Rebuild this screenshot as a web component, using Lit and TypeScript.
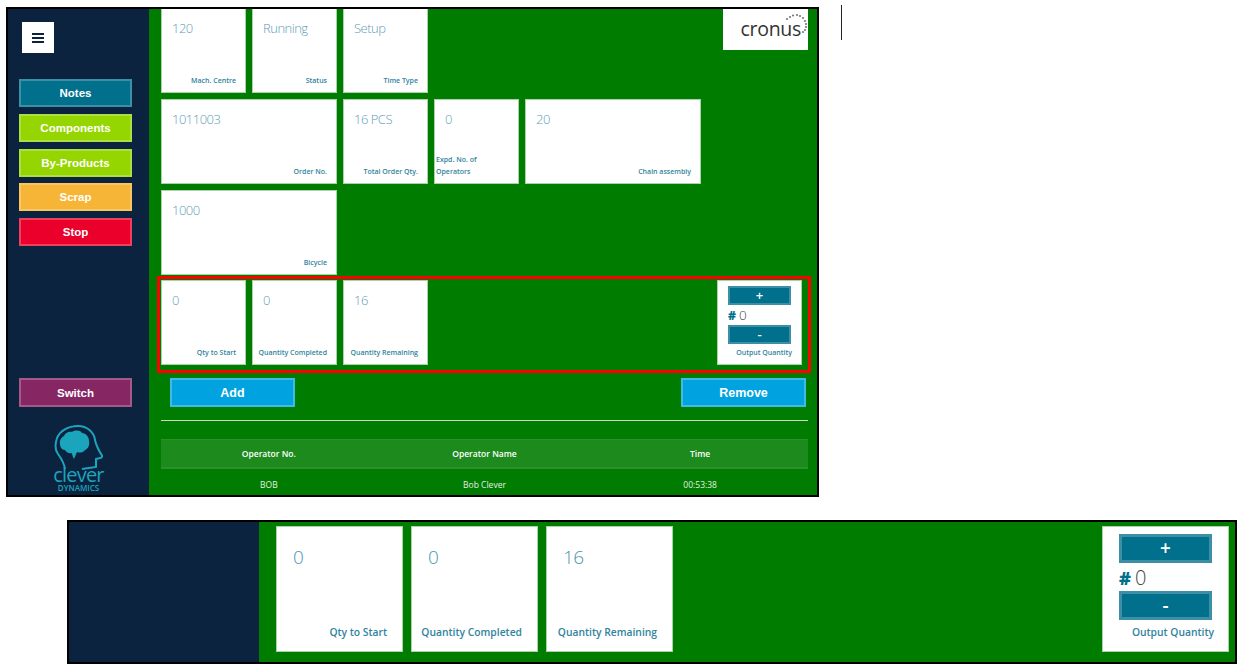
import {LitElement, html, svg, css} from 'lit';
import {customElement} from 'lit/decorators.js';

const TOP = [
    {value: '120', label: 'Mach. Centre'},
    {value: 'Running', label: 'Status'},
    {value: 'Setup', label: 'Time Type'},
];
const ORDER = [
    {value: '1011003', label: 'Order No.', wide: true},
    {value: '16 PCS', label: 'Total Order Qty.'},
    {value: '0', label: 'Expd. No. of Operators', left: true},
    {value: '20', label: 'Chain assembly', wide: true},
];
const QTY = [
    {value: '0', label: 'Qty to Start'},
    {value: '0', label: 'Quantity Completed'},
    {value: '16', label: 'Quantity Remaining'},
];
const DOTS = [[64, 11], [67, 9], [70, 7.5], [74, 7], [77, 8], [80, 10], [82, 13], [83, 16], [83, 19], [82, 22], [80, 24]];

@customElement('app-root')
export class AppRoot extends LitElement {
    static styles = css`
        :host {
            display: block;
            width: 1246px;
            height: 671px;
            background: #fff;
            overflow: hidden;
            font-family: 'Open Sans', sans-serif;
        }
        * { box-sizing: border-box; }

        .top {
            display: flex;
            align-items: flex-start;
            padding: 5px 0 0 6px;
        }
        .frame {
            display: flex;
            width: 813px;
            height: 490px;
            margin-top: 2px;
            border: 2px solid #000;
            overflow: hidden;
        }
        .rule {
            width: 1px;
            height: 35px;
            margin-left: 22px;
            background: #222;
        }

        .side {
            display: flex;
            flex-direction: column;
            width: 141px;
            flex: none;
            padding: 13px 0 0 11px;
            background: #0c2340;
        }
        .burger {
            display: flex;
            align-items: center;
            justify-content: center;
            width: 32px;
            height: 31px;
            margin: 0 0 26px 3px;
            background: #fff;
        }
        .menu {
            display: flex;
            flex-direction: column;
            gap: 6.75px;
        }
        .btn {
            display: flex;
            align-items: center;
            justify-content: center;
            width: 113px;
            height: 28px;
            border: 2px solid;
            color: #fff;
            font-family: 'Liberation Sans', sans-serif;
            font-size: 11.5px;
            font-weight: 700;
        }
        .notes { background: #00708c; border-color: #3d8fa6; }
        .lime { background: #95d600; border-color: #acdf44; }
        .scrap { background: #f7b538; border-color: #f9c664; }
        .stop { background: #ea002a; border-color: #ee3f5e; }
        .switch { background: #862663; border-color: #a3598a; height: 29px; margin-top: 132px; }

        .logo {
            display: flex;
            flex-direction: column;
            align-items: center;
            width: 113px;
            margin: 18px 0 0 3px;
            color: #1ba5bd;
        }
        .logo svg { display: block; margin-left: 1px; }
        .clever {
            margin-top: -3px;
            font-size: 20px;
            line-height: 14px;
            letter-spacing: -0.8px;
        }
        .dynamics {
            margin-top: 2px;
            font-size: 8px;
            line-height: 8px;
            font-weight: 600;
        }

        .main {
            flex: 1;
            min-width: 0;
            padding: 0 9px 0 12px;
            background: #007c00;
        }
        .row {
            display: flex;
            gap: 6px;
            margin-bottom: 6px;
        }
        .row:first-child { margin-top: -1px; }
        .tile {
            display: flex;
            flex-direction: column;
            justify-content: space-between;
            width: 85px;
            height: 85px;
            padding: 10px 9px 6px 10px;
            background: #fff;
            border: 1px solid #a9d4a9;
        }
        .tile.wide { width: 176px; }
        .value {
            color: #5f9db8;
            font-size: 13px;
            font-weight: 300;
            line-height: 18px;
            letter-spacing: -0.5px;
        }
        .label {
            margin-left: -9px;
            color: #2f839d;
            font-size: 7px;
            font-weight: 600;
            line-height: 11.5px;
            text-align: right;
            white-space: nowrap;
        }
        .label.left {
            width: 62px;
            margin: 0 0 0 -9px;
            text-align: left;
            white-space: normal;
        }
        .brand {
            position: relative;
            display: flex;
            align-items: center;
            justify-content: flex-end;
            width: 85px;
            height: 42px;
            margin-left: auto;
            padding: 0 7px 2px 0;
            background: #fff;
            color: #333;
            font-size: 19.5px;
            font-weight: 500;
            letter-spacing: -0.3px;
        }
        .brand svg { position: absolute; left: 0; top: 0; }

        .red {
            display: flex;
            gap: 6px;
            height: 97px;
            margin: -5px -3px 0 -4px;
            padding: 1px 6px 5px 1px;
            border: 3px solid #f00;
        }
        .output {
            display: flex;
            flex-direction: column;
            justify-content: flex-start;
            margin-left: auto;
            padding: 5px 10px 6px 10px;
        }
        .step {
            width: 63px;
            height: 19px;
            border: 2px solid #3d8fa6;
            background: #00708c;
            color: #fff;
            display: flex;
            align-items: center;
            justify-content: center;
            font-size: 13px;
            font-weight: 600;
            line-height: 1;
        }
        .count {
            display: flex;
            align-items: center;
            gap: 3px;
            height: 20px;
            color: #444;
            font-size: 13.5px;
            font-weight: 300;
        }
        .count b { color: #00708c; font-size: 12px; font-weight: 800; }
        .output .label { margin: auto -1px 0 -3px; }

        .actions {
            display: flex;
            justify-content: space-between;
            margin: 5px 2px 0 9px;
        }
        .action {
            width: 125px;
            height: 29px;
            background: #00a3e0;
            border-color: #40bbe9;
            font-size: 12.5px;
        }
        hr {
            height: 1px;
            margin: 13px 0 18px;
            border: 0;
            background: #c7dcc7;
        }
        .thead, .tbody {
            display: grid;
            grid-template-columns: repeat(3, 1fr);
            text-align: center;
            color: #fff;
            font-size: 8.5px;
        }
        .thead {
            align-items: center;
            height: 30px;
            background: #1c8a1c;
            border-top: 1px solid #2b922b;
            border-bottom: 2px solid #2b922b;
            font-weight: 600;
        }
        .tbody { padding-top: 9px; color: #e4f0e4; font-size: 8.5px; line-height: 14px; }

        .banner {
            display: flex;
            width: 1170px;
            height: 144px;
            margin: 23px 0 0 67px;
            border: 2px solid #000;
            background: #007c00;
        }
        .pad { width: 190px; background: #0c2340; }
        .strip {
            display: flex;
            flex: 1;
            gap: 8px;
            padding: 4px 6px 10px 17px;
        }
        .strip .tile {
            width: 127px;
            height: 126px;
            padding: 17px 15px 12px 16px;
        }
        .strip .value { color: #4b96b4; font-size: 19px; line-height: 27px; letter-spacing: -0.5px; }
        .strip .label { margin-left: -15px; font-size: 10.3px; line-height: 14px; }
        .strip .output { margin-left: auto; padding: 7px 15px 12px 16px; }
        .strip .step { width: 93px; height: 29px; border-width: 3px; font-size: 19px; }
        .strip .count { height: 28px; padding-top: 1px; gap: 4px; font-size: 20px; }
        .strip .count b { font-size: 18px; }
        .strip .output .label { margin: auto -1px 0 -3px; }
    `;

    tile(t: {value: string; label: string; wide?: boolean; left?: boolean}) {
        return html`
            <div class="tile ${t.wide ? 'wide' : ''}">
                <div class="value">${t.value}</div>
                <div class="label ${t.left ? 'left' : ''}">${t.label}</div>
            </div>`;
    }

    output() {
        return html`
            <div class="tile output">
                <div class="step">+</div>
                <div class="count"><b>#</b> 0</div>
                <div class="step">-</div>
                <div class="label">Output Quantity</div>
            </div>`;
    }

    render() {
        return html`
            <div class="top">
                <div class="frame">
                    <div class="side">
                        <div class="burger">
                            <svg width="12" height="10" viewBox="0 0 12 10" fill="#0c2340">
                                <rect width="12" height="2"></rect>
                                <rect y="4" width="12" height="2"></rect>
                                <rect y="8" width="12" height="2"></rect>
                            </svg>
                        </div>
                        <div class="menu">
                            <div class="btn notes">Notes</div>
                            <div class="btn lime">Components</div>
                            <div class="btn lime">By-Products</div>
                            <div class="btn scrap">Scrap</div>
                            <div class="btn stop">Stop</div>
                        </div>
                        <div class="btn switch">Switch</div>
                        <div class="logo">
                            <svg width="50" height="46" viewBox="0 0 50 46">
                                <path d="M11 44C10 37 7 33 4 29C1 25 1 19 3 13C6 6 14 1 24 1C33 1 40 7 41 15C42 20 44 24 47 29C49 31 48 33 46 33L42 34L42 42L28 44" fill="none" stroke="currentColor" stroke-width="2"></path>
                                <path d="M6 19C5 15 8 12 10 11C11 8 15 6 18 7C21 5 26 5 28 8C32 8 35 12 35 16C36 20 34 24 31 25C29 28 25 28 23 27C22 29 21 32 20 34C19 32 18 30 18 28C15 29 12 27 11 25C8 25 6 22 6 19Z" fill="currentColor"></path>
                            </svg>
                            <div class="clever">clever</div>
                            <div class="dynamics">DYNAMICS</div>
                        </div>
                    </div>
                    <div class="main">
                        <div class="row">
                            ${TOP.map((t) => this.tile(t))}
                            <div class="brand">
                                cronus
                                <svg width="85" height="42" viewBox="0 0 85 42" fill="#7a7a7a">
                                    ${DOTS.map(([x, y]) => svg`<circle cx=${x} cy=${y} r="1.1"></circle>`)}
                                </svg>
                            </div>
                        </div>
                        <div class="row">${ORDER.map((t) => this.tile(t))}</div>
                        <div class="row">${this.tile({value: '1000', label: 'Bicycle', wide: true})}</div>
                        <div class="red">
                            ${QTY.map((t) => this.tile(t))}
                            ${this.output()}
                        </div>
                        <div class="actions">
                            <div class="btn action">Add</div>
                            <div class="btn action">Remove</div>
                        </div>
                        <hr />
                        <div class="thead">
                            <div>Operator No.</div>
                            <div>Operator Name</div>
                            <div>Time</div>
                        </div>
                        <div class="tbody">
                            <div>BOB</div>
                            <div>Bob Clever</div>
                            <div>00:53:38</div>
                        </div>
                    </div>
                </div>
                <div class="rule"></div>
            </div>
            <div class="banner">
                <div class="pad"></div>
                <div class="strip">
                    ${QTY.map((t) => this.tile(t))}
                    ${this.output()}
                </div>
            </div>
        `;
    }
}
